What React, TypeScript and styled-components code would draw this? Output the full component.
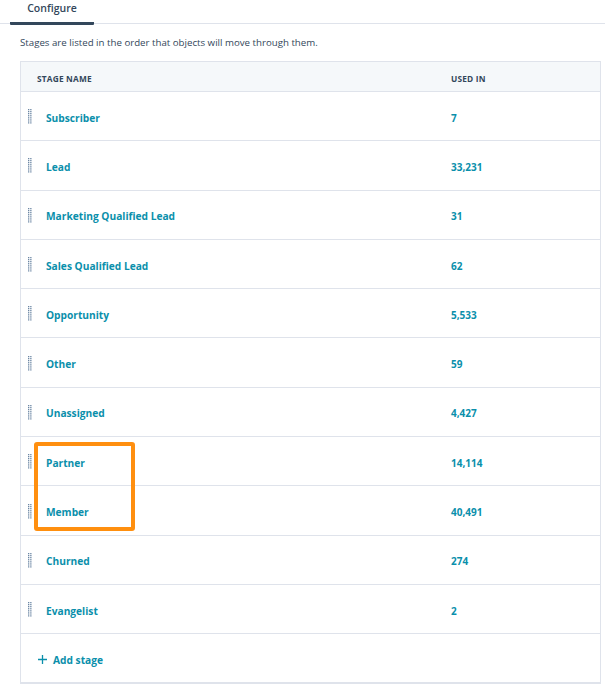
import styled, { createGlobalStyle } from 'styled-components'

const GlobalStyle = createGlobalStyle`
  html, body {
    margin: 0;
    padding: 0;
    background: #ffffff;
  }
  body {
    font-family: "Open Sans", "Noto Sans", sans-serif;
    color: #33475b;
  }
`

const Page = styled.div`
  width: 605px;
  height: 686px;
  overflow: hidden;
`

const TabBar = styled.div`
  display: flex;
  border-bottom: 1px solid #dfe3eb;
`

const Tab = styled.div`
  width: 84px;
  margin-left: 10px;
  margin-bottom: -2px;
  padding-top: 1px;
  height: 25px;
  box-sizing: border-box;
  font-size: 10.5px;
  font-weight: 600;
  line-height: 14px;
  color: #33475b;
  text-align: center;
  border-bottom: 3px solid #33475b;
  border-radius: 1px;
`

const Description = styled.p`
  margin: 11px 0 0 20px;
  font-size: 9.7px;
  line-height: 16px;
  color: #33475b;
`

const Table = styled.div`
  margin: 10px 4px 0 20px;
  border: 1px solid #dfe3eb;
  border-bottom-width: 2px;
`

const HeaderRow = styled.div`
  display: grid;
  grid-template-columns: 430px 1fr;
  height: 30px;
  padding-top: 3px;
  box-sizing: border-box;
  align-items: center;
  background: #f5f8fa;
  border-bottom: 1px solid #dfe3eb;
  font-size: 8.3px;
  font-weight: 700;
  letter-spacing: 0.2px;
  text-transform: uppercase;
  color: #33475b;
`

const HeaderCell = styled.div<{ $pad: number }>`
  padding-left: ${p => p.$pad}px;
`

const Row = styled.div`
  position: relative;
  display: grid;
  grid-template-columns: 430px 1fr;
  height: 49.3px;
  padding-top: 3px;
  box-sizing: border-box;
  align-items: center;
  border-bottom: 1px solid #dfe3eb;
`

const NameCell = styled.div`
  display: flex;
  align-items: center;
`

const Handle = styled.div`
  display: flex;
  width: 25px;
  padding-left: 7px;
  margin-top: -2px;
  box-sizing: border-box;
`

const LinkText = styled.span`
  font-size: 10.2px;
  font-weight: 700;
  color: #0a8fab;
`

const CountCell = styled.div`
  font-size: 10px;
  font-weight: 700;
  color: #0a8fab;
`

const AddRow = styled.div`
  display: flex;
  align-items: center;
  height: 48px;
  padding-left: 16px;
  padding-top: 3px;
  box-sizing: border-box;
  gap: 5px;
  font-size: 10.2px;
  font-weight: 700;
  color: #0a8fab;
`

const Highlight = styled.div`
  position: absolute;
  left: 13px;
  top: 5px;
  width: 101px;
  height: 89px;
  border: 4px solid #ff8f0f;
  border-radius: 3px;
  box-sizing: border-box;
  pointer-events: none;
`

const stages = [
  { name: 'Subscriber', count: '7' },
  { name: 'Lead', count: '33,231' },
  { name: 'Marketing Qualified Lead', count: '31' },
  { name: 'Sales Qualified Lead', count: '62' },
  { name: 'Opportunity', count: '5,533' },
  { name: 'Other', count: '59' },
  { name: 'Unassigned', count: '4,427' },
  { name: 'Partner', count: '14,114' },
  { name: 'Member', count: '40,491' },
  { name: 'Churned', count: '274' },
  { name: 'Evangelist', count: '2' },
]

function DragDots() {
  const dots = []
  for (let r = 0; r < 8; r++) {
    for (let c = 0; c < 2; c++) {
      dots.push(<rect key={`${r}-${c}`} x={c * 2.2} y={r * 1.9} width={1.3} height={1.2} fill="#6a85a3" />)
    }
  }
  return (
    <svg width="4" height="15" viewBox="0 0 4 15">
      {dots}
    </svg>
  )
}

const App = () => {
  return (
    <Page>
      <GlobalStyle />
      <TabBar>
        <Tab>Configure</Tab>
      </TabBar>
      <Description>Stages are listed in the order that objects will move through them.</Description>
      <Table>
        <HeaderRow>
          <HeaderCell $pad={16}>Stage name</HeaderCell>
          <HeaderCell $pad={0}>Used in</HeaderCell>
        </HeaderRow>
        {stages.map((s, i) => (
          <Row key={s.name}>
            <NameCell>
              <Handle><DragDots /></Handle>
              <LinkText>{s.name}</LinkText>
            </NameCell>
            <CountCell>{s.count}</CountCell>
            {i === 7 && <Highlight />}
          </Row>
        ))}
        <AddRow>
          <svg width="11" height="11" viewBox="0 0 11 11">
            <path d="M5.5 1v9M1 5.5h9" stroke="#0a8fab" strokeWidth="1.3" />
          </svg>
          Add stage
        </AddRow>
      </Table>
    </Page>
  )
}

export default App
